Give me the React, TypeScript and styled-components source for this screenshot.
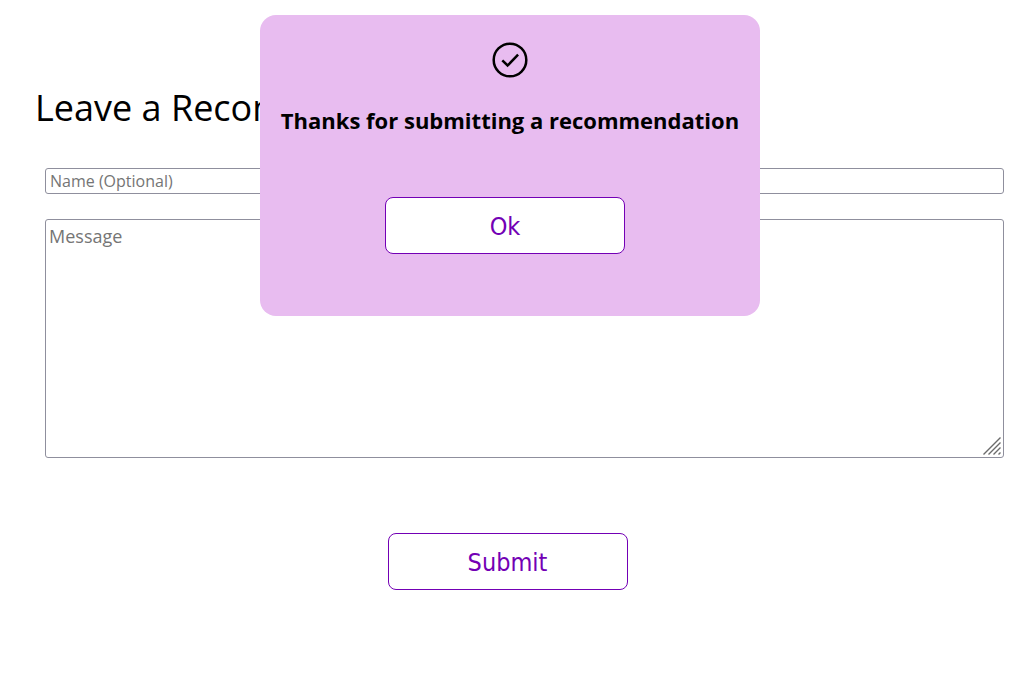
import React, { useState } from "react";
import styled, { createGlobalStyle } from "styled-components";

const GlobalStyle = createGlobalStyle`
  * {
    box-sizing: border-box;
  }
  body {
    margin: 0;
    background: #fff;
    color: #000;
    font-family: "Trebuchet MS", "Open Sans", sans-serif;
  }
`;

const Page = styled.main`
  padding: 80px 11px 40px 35px;
`;

const Title = styled.h1`
  margin: 0;
  font-size: 36px;
  line-height: 56px;
  font-weight: 400;
`;

const Form = styled.form`
  display: flex;
  flex-direction: column;
  gap: 25px;
  padding: 32px 0 0 10px;
`;

const fieldStyles = `
  display: block;
  width: 100%;
  margin: 0;
  border: 1px solid #8f8f9d;
  border-radius: 3px;
  background: #fff;
  color: #000;
  font-family: inherit;
  font-weight: 500;
  &::placeholder {
    color: #757575;
    opacity: 1;
  }
`;

const NameInput = styled.input`
  ${fieldStyles}
  height: 26px;
  padding: 0 4px;
  font-size: 16px;
`;

const MessageBox = styled.div`
  position: relative;
`;

const MessageInput = styled.textarea`
  ${fieldStyles}
  height: 239px;
  padding: 4px 3px;
  font-size: 18px;
  line-height: 24px;
  resize: none;
`;

const Grip = styled.svg`
  position: absolute;
  right: 3px;
  bottom: 3px;
  pointer-events: none;
`;

const Button = styled.button`
  width: 240px;
  height: 57px;
  padding: 2px 0 0;
  border: 1px solid #7300b5;
  border-radius: 8px;
  background: #fff;
  color: #7300b5;
  font-family: "DejaVu Sans Condensed", "DejaVu Sans", sans-serif;
  font-size: 25px;
  cursor: pointer;
`;

const Actions = styled.div`
  display: flex;
  justify-content: center;
  padding: 50px 34px 0 0;
`;

const Overlay = styled.div`
  position: absolute;
  top: 15px;
  left: 5px;
  right: 0;
  display: flex;
  justify-content: center;
`;

const Dialog = styled.section`
  display: flex;
  flex-direction: column;
  align-items: center;
  width: 500px;
  padding: 25px 0 62px;
  border-radius: 16px;
  background: #e8bcf0;
`;

const Message = styled.h2`
  margin: 25px 0 62px;
  font-size: 22px;
  line-height: 30px;
  font-weight: 700;
  white-space: nowrap;
`;

const DialogActions = styled.div`
  padding-right: 10px;
`;

export default function App() {
  const [open, setOpen] = useState(true);
  return (
    <>
      <GlobalStyle />
      <Page>
        <Title>Leave a Recommendation</Title>
        <Form onSubmit={(e) => { e.preventDefault(); setOpen(true); }}>
          <NameInput type="text" aria-label="Name" placeholder="Name (Optional)" />
          <MessageBox>
            <MessageInput aria-label="Message" placeholder="Message" />
            <Grip width="19" height="19" viewBox="0 0 19 19" stroke="#6b6b6b" strokeWidth="1.4" aria-hidden="true">
              <path d="M1.5 18.5 18.5 1.5M6.5 18.5l12-12M11.5 18.5l7-7M16.5 18.5l2-2" />
            </Grip>
          </MessageBox>
          <Actions>
            <Button type="submit">Submit</Button>
          </Actions>
        </Form>
      </Page>
      {open && (
        <Overlay>
          <Dialog role="dialog" aria-labelledby="thanks">
            <svg width="40" height="40" viewBox="0 0 40 40" fill="none" stroke="#000" strokeWidth="2.5" aria-hidden="true">
              <circle cx="20" cy="20" r="16.3" />
              <path d="m12.3 20.3 5.3 5.2 10.5-10.8" />
            </svg>
            <Message id="thanks">Thanks for submitting a recommendation</Message>
            <DialogActions>
              <Button type="button" onClick={() => setOpen(false)}>Ok</Button>
            </DialogActions>
          </Dialog>
        </Overlay>
      )}
    </>
  );
}
